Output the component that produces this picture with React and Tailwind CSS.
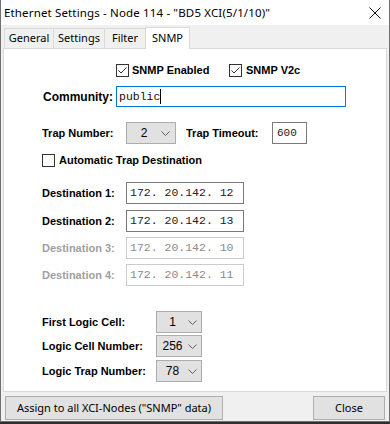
import React from 'react';

const ui = { fontFamily: '"Noto Sans", "Open Sans", sans-serif' };
const bold = { fontFamily: '"Liberation Sans", Arial, sans-serif' };
const mono = { fontFamily: '"Liberation Mono", "Courier New", monospace' };

const Chevron = () => (
    <svg width="9" height="5" viewBox="0 0 9 5" className="shrink-0">
        <path d="M0.5 0.5 L4.5 4.5 L8.5 0.5" fill="none" stroke="#606060" strokeWidth="1" />
    </svg>
);

const Check = ({ checked, className = '' }) => (
    <span className={`w-[13px] h-[13px] border border-[#333] bg-white flex items-center justify-center shrink-0 ${className}`}>
        {checked && (
            <svg width="11" height="11" viewBox="0 0 11 11">
                <path d="M1.5 5.5 L4 8 L9.5 2.5" fill="none" stroke="#333" strokeWidth="1" />
            </svg>
        )}
    </span>
);

const Combo = ({ value, width, textWidth }) => (
    <div className={`h-[22px] ${width} bg-[#e1e1e1] border border-[#adadad] flex items-center`}>
        <span className={`${textWidth} text-center text-[12px] font-normal text-black`} style={bold}>{value}</span>
        <Chevron />
    </div>
);

const Field = ({ children, width, disabled }) => (
    <div
        className={`h-[22px] ${width} bg-white border ${disabled ? 'border-[#cccccc] text-[#8a8a8a]' : 'border-[#7a7a7a] text-[#222]'} flex items-center pl-[3px] text-[11.5px] font-normal whitespace-pre`}
        style={mono}
    >
        {children}
    </div>
);

const Tab = ({ label, width, active }) => (
    <div
        className={`${width} flex items-center justify-center text-[11px] text-black border border-[#d9d9d9] border-b-0 ${active ? 'h-[22px] bg-white relative z-10 -mb-px' : 'h-[20px] bg-[#f0f0f0] border-r-0'}`}
        style={ui}
    >
        {label}
    </div>
);

const destinations = [
    { label: 'Destination 1:', ip: '172. 20.142. 12', mt: 'mt-[15px]' },
    { label: 'Destination 2:', ip: '172. 20.142. 13', mt: 'mt-[6px]' },
    { label: 'Destination 3:', ip: '172. 20.142. 10', mt: 'mt-[5px]', disabled: true },
    { label: 'Destination 4:', ip: '172. 20.142. 11', mt: 'mt-[5px]', disabled: true },
];

const logic = [
    { label: 'First Logic Cell:', value: '1', mt: 'mt-[25px]' },
    { label: 'Logic Cell Number:', value: '256', mt: 'mt-[2px]' },
    { label: 'Logic Trap Number:', value: '78', mt: 'mt-[3px]' },
];

export default function App() {
    return (
        <div className="w-[390px] h-[424px] bg-[#2e2e2e] overflow-hidden">
            <div className="h-[422px] bg-[#f0f0f0] border-x border-b border-[#707070] flex flex-col">
                {/* title bar */}
                <div className="h-[25px] bg-white flex items-center pl-[3px] pr-[8px] text-[11.5px] text-black shrink-0" style={ui}>
                    <span className="flex-1 tracking-[0.15px]">Ethernet Settings - Node 114 - "BD5 XCI(5/1/10)"</span>
                    <svg width="12" height="12" viewBox="0 0 12 12">
                        <path d="M0.5 0.5 L11.5 11.5 M11.5 0.5 L0.5 11.5" stroke="#111" strokeWidth="1" />
                    </svg>
                </div>

                {/* tabs */}
                <div className="h-[23px] flex items-end pl-[3px] shrink-0">
                    <Tab label="General" width="w-[49px]" />
                    <Tab label="Settings" width="w-[51px]" />
                    <Tab label="Filter" width="w-[41px]" />
                    <Tab label="SNMP" width="w-[45px]" active />
                </div>

                {/* panel */}
                <div className="mx-[2px] h-[344px] bg-white border border-[#d9d9d9] shrink-0 text-[11px] font-bold text-black" style={bold}>
                    <div className="mt-[14px] h-[15px] flex items-center pl-[112px]">
                        <div className="w-[113px] flex items-center gap-[3px]">
                            <Check checked />
                            <span>SNMP Enabled</span>
                        </div>
                        <div className="flex items-center gap-[4px]">
                            <Check checked />
                            <span>SNMP V2c</span>
                        </div>
                    </div>

                    <div className="pl-[38px]">
                        <div className="mt-[8px] h-[21px] flex items-center">
                            <span className="w-[74px] pl-px text-[12px]">Community:</span>
                            <div className="w-[230px] h-[21px] border border-[#0078d7] flex items-center pl-[2px] text-[11.5px] font-normal text-[#2a0a0a]" style={mono}>
                                public<span className="w-px h-[15px] bg-black" />
                            </div>
                        </div>

                        <div className="mt-[15px] h-[22px] flex items-center">
                            <span className="w-[84px]">Trap Number:</span>
                            <Combo value="2" width="w-[50px]" textWidth="w-[34px]" />
                            <span className="ml-[10px] w-[86px]">Trap Timeout:</span>
                            <div className="w-[35px] h-[22px] bg-white border border-[#7a7a7a] flex items-center pl-[4px] text-[11px] font-normal text-[#222]" style={mono}>600</div>
                        </div>

                        <div className="mt-[10px] h-[13px] flex items-center gap-[4px]">
                            <Check />
                            <span>Automatic Trap Destination</span>
                        </div>

                        {destinations.map(d => (
                            <div key={d.label} className={`${d.mt} h-[22px] flex items-center`}>
                                <span className={`w-[84px] ${d.disabled ? 'text-[#a0a0a0]' : ''}`}>{d.label}</span>
                                <Field width="w-[118px]" disabled={d.disabled}>{d.ip}</Field>
                            </div>
                        ))}

                        {logic.map(l => (
                            <div key={l.label} className={`${l.mt} h-[22px] flex items-center`}>
                                <span className="w-[114px]">{l.label}</span>
                                <Combo value={l.value} width="w-[46px]" textWidth="w-[31px]" />
                            </div>
                        ))}
                    </div>
                </div>

                {/* buttons */}
                <div className="flex-1 flex items-start pt-[4px] pl-[4px] pr-[4px] justify-between text-[11px] text-black" style={ui}>
                    <button className="w-[218px] h-[24px] bg-[#e1e1e1] border border-[#adadad] flex items-center justify-center">
                        Assign to all XCI-Nodes ("SNMP" data)
                    </button>
                    <button className="w-[72px] h-[24px] bg-[#e1e1e1] border border-[#adadad] flex items-center justify-center">
                        Close
                    </button>
                </div>
            </div>
        </div>
    );
}
